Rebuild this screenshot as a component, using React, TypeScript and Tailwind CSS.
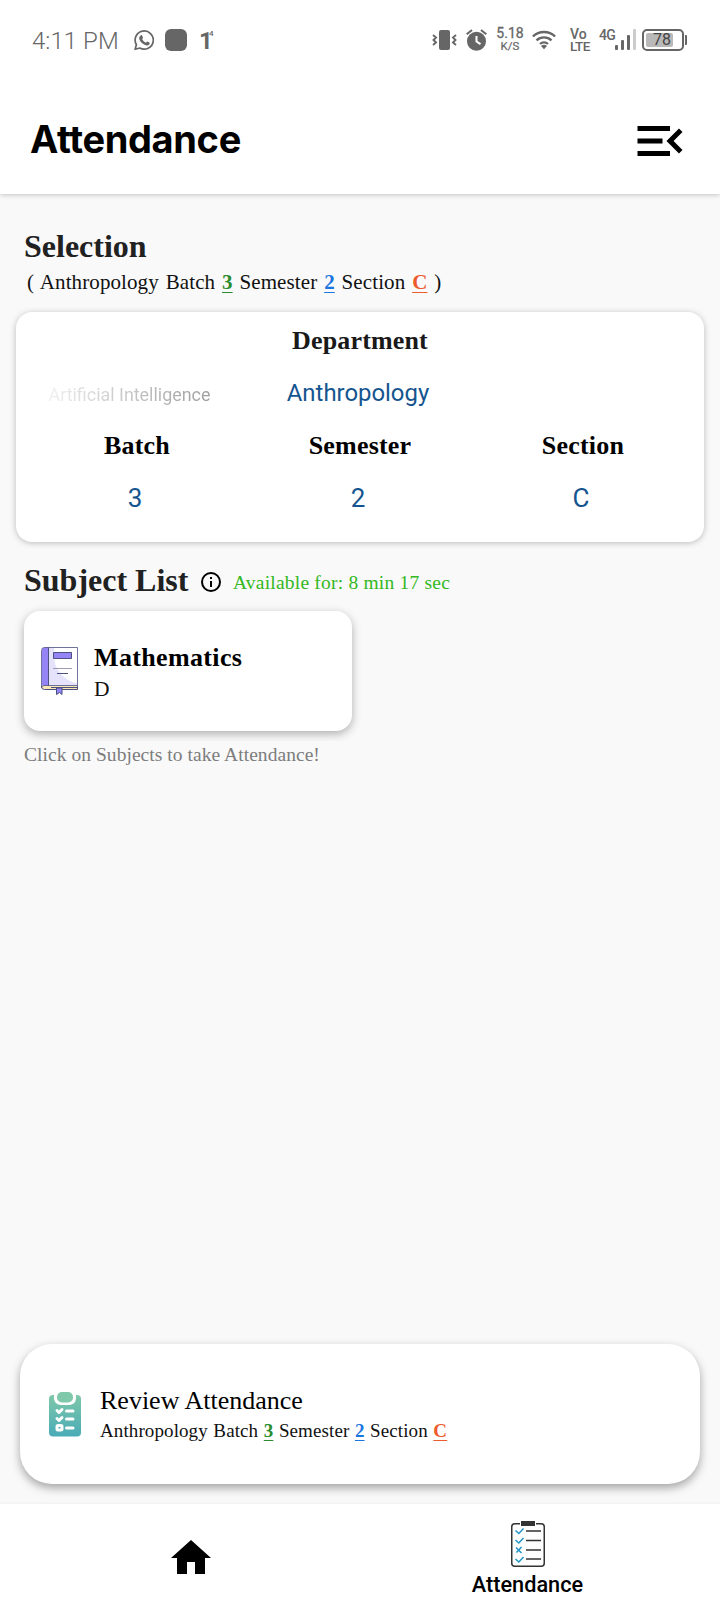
import React from "react";

const serif = "font-['Liberation_Serif',serif]";
const roboto = "font-[Roboto,sans-serif]";

function StatusBar() {
  return (
    <div className={`flex h-20 items-start text-[#666666] ${roboto}`}>
      <div className="ml-8 mt-[26px] w-[102px] whitespace-nowrap text-[24px] font-light leading-[30px] tracking-[0.050px]">4:11 PM</div>
      <svg className="mt-[30px] h-[21px] w-[20px]" viewBox="0 0 20 21" fill="none">
        <path d="M1.1 19.3l1.3-4.6A9.1 9.1 0 1 1 5.8 18z" stroke="#666" strokeWidth="1.7" strokeLinejoin="round" />
        <path d="M7 5.2c.7-.3 1 0 1.300.8l.7 1.700c.1.500-.8 1.200-.8 1.600.8 1.600 2 2.700 3.600 3.400.5.1 1.100-1.200 1.600-1.100l2 1c.6.400.2 1.700-.4 2.200-.9.700-2 .9-3.200.5-3-.9-5.200-3-6.400-5.700-.6-1.700.1-3.700 1.600-4.400z" fill="#666" />
      </svg>
      <div className="ml-[11px] mt-[29px] h-[22px] w-[22px] rounded-[6px] bg-[#666666]" />
      <div className="ml-[12px] mt-[29px] flex items-start">
        <span className="w-[10px] text-[24px] font-bold leading-[24px] tracking-[-4px]">1</span>
        <span className="text-[8px] font-medium leading-[10px]">4</span>
      </div>
      <div className="flex-1" />
      <svg className="mt-[29px] h-[22px] w-[25px]" viewBox="0 0 25 22" fill="none" stroke="#666" strokeWidth="1.9">
        <rect x="7" y="1" width="11" height="20" rx="2" fill="#666" stroke="none" />
        <path d="M1 6l3 2.500-2.500 2.500L4 13.500 1 16M24 6l-3 2.500 2.500 2.500-2.500 2.500L24 16" />
      </svg>
      <svg className="ml-[9px] mt-[29px] h-[22px] w-[21px]" viewBox="0 0 21 22" fill="none" stroke="#666">
        <circle cx="10.500" cy="12.300" r="9.500" fill="#666" stroke="none" />
        <path d="M.7 5.300L6 1M20.300 5.300L15 1" strokeWidth="2" />
        <path d="M10.500 7v5.500l4 2.700" stroke="#fff" strokeWidth="2" />
      </svg>
      <div className="ml-[8px] mt-[26px] flex w-[30px] flex-col items-center whitespace-nowrap">
        <div className="text-[14px] leading-[14px] [-webkit-text-stroke:0.300px_#666666]">5.18</div>
        <div className="mt-px text-[11.500px] leading-[11px] [-webkit-text-stroke:0.200px_#666666]">K/S</div>
      </div>
      <svg className="ml-[7px] mt-[30px] h-[20px] w-[24px]" viewBox="0 0 24 20" fill="none" stroke="#666" strokeWidth="2.300">
        <path d="M.9 6.500a16 16 0 0 1 22.200 0M4.500 10.300a11 11 0 0 1 15 0M8 14a6 6 0 0 1 8 0" />
        <path d="M12 19.200l-3-3.200a4.600 4.600 0 0 1 6 0z" fill="#666" stroke="none" />
      </svg>
      <div className="ml-[14px] mt-[27px] w-[22px] text-[14px] font-medium">
        <div className="leading-[14px]">Vo</div>
        <div className="-mt-px text-[13.500px] leading-[12px] tracking-[-0.6px]">LTE</div>
      </div>
      <div className="ml-[7px] mt-[27px] w-[16px] text-[14px] font-medium leading-[17px] tracking-[-0.700px]">4G</div>
      <svg className="mt-[29px] h-[22px] w-[21px]" viewBox="0 0 21 22">
        <rect x="0" y="16" width="3" height="5" rx="1" fill="#666" />
        <rect x="6" y="11" width="3" height="10" rx="1" fill="#666" />
        <rect x="12" y="6" width="3" height="15" rx="1" fill="#666" />
        <rect x="18" y="0" width="3" height="21" rx="1" fill="#ccc" />
      </svg>
      <div className="ml-[6px] mt-[29px] flex h-[22px] w-[42px] rounded-[5px] border-2 border-[#666666] p-[2px]">
        <div className="flex h-[14px] w-[27px] items-center rounded-[2px] bg-[#b9b9b9] pl-[7px] text-[16px] leading-[14px] text-[#444444]">78</div>
      </div>
      <div className="ml-[1px] mr-[33px] mt-[35px] h-[10px] w-[2px] rounded-r-[1px] bg-[#666666]" />
    </div>
  );
}

function Header() {
  return (
    <header className="flex h-[114px] items-start justify-between">
      <h1 className="ml-[30px] mt-[35px] font-[Inter,sans-serif] text-[38px] font-bold leading-[48px] tracking-[-0.350px] text-black">Attendance</h1>
      <svg className="mr-[30.500px] mt-[31px] h-[60px] w-[60px]" viewBox="0 0 24 24">
        <path d="M3 18h13v-2H3v2zm0-5h10v-2H3v2zm0-7v2h13V6H3zm18 9.590L17.420 12 21 8.410 19.590 7l-5 5 5 5L21 15.590z" />
      </svg>
    </header>
  );
}

function Choice() {
  return (
    <>
      Anthropology Batch <b className="text-[#2a8c2e] underline decoration-1 underline-offset-[3px]">3</b> Semester{" "}
      <b className="text-[#1976e0] underline decoration-1 underline-offset-[3px]">2</b> Section{" "}
      <b className="text-[#ee5a2c] underline decoration-1 underline-offset-[3px]">C</b>
    </>
  );
}

const pickers = [
  { label: "Batch", value: "3" },
  { label: "Semester", value: "2" },
  { label: "Section", value: "C" },
];

function SelectionCard() {
  return (
    <section className="mx-4 mt-[16px] h-[230px] rounded-[16px] bg-white px-[9.500px] pt-[13px] shadow-[0_1px_6px_rgba(0,0,0,0.25)]">
      <h3 className={`text-center text-[26px] font-bold leading-[32px] tracking-[0.150px] text-[#191919] ${serif}`}>Department</h3>
      <div className={`mt-4 grid h-10 grid-cols-3 items-center ${roboto}`}>
        <div className="ml-[23px] w-[164px] whitespace-nowrap bg-gradient-to-r from-[#f0f0f0] to-[#9c9c9c] bg-clip-text pt-[4px] text-[17.900px] leading-[36px] text-transparent">Artificial Intelligence</div>
        <div className="-ml-[4px] text-center text-[23.900px] leading-[40px] text-[#15558f]">Anthropology</div>
      </div>
      <div className="mt-[17px] grid grid-cols-3 text-center">
        {pickers.map((p) => (
          <div key={p.label}>
            <h3 className={`text-[26px] font-bold leading-[32px] tracking-[0.200px] text-black ${serif}`}>{p.label}</h3>
            <div className={`mr-[4px] mt-[16px] text-[26px] leading-[40px] text-[#15558f] ${roboto}`}>{p.value}</div>
          </div>
        ))}
      </div>
    </section>
  );
}

function BookIcon() {
  return (
    <svg className="h-[49px] w-[37px]" viewBox="0 0 37 49" fill="none" stroke="#4d5180">
      <path d="M4 1.500h32v38H1V4.500a3 3 0 0 1 3-3z" fill="#e5e2fb" stroke="none" />
      <path d="M13 1.500h23v36C23 34 13 24 13 10z" fill="#fff" stroke="none" />
      <path d="M4 1.500h3.500v38H1V4.500a3 3 0 0 1 3-3z" fill="#9584f6" stroke="none" />
      <path d="M1 40h35v3.500H4a3 3 0 0 1-3-3z" fill="#f8e7b4" stroke="none" />
      <path d="M36.500 39.500H4a3 3 0 0 0-3.500 2V4.500a3 3 0 0 1 3-3h33z" strokeOpacity=".8" />
      <path d="M7.500 1.500v38M.5 40v.5a3 3 0 0 0 3 3h33v-4M10 41.500h26" />
      <path d="M12.500 6.500h18v6h-18z" fill="#9584f6" />
      <path d="M12 22.500h19" stroke="#9b9bb4" />
      <path d="M16 27.500h11" />
      <path d="M15.500 42v6.500l3-2 2.500 2V42z" fill="#9584f6" />
    </svg>
  );
}

function ReviewIcon() {
  return (
    <svg className="h-[45px] w-[32px]" viewBox="0 0 32 45" fill="none">
      <defs>
        <linearGradient id="mint" x1="0" y1="0" x2="0" y2="1">
          <stop offset="0" stopColor="#7fc8a9" />
          <stop offset="1" stopColor="#49abb7" />
        </linearGradient>
      </defs>
      <rect y="3" width="32" height="41.500" rx="4" fill="url(#mint)" />
      <path d="M5 2h22v4c0 5-4 7-7 7h-8c-4 0-7-3-7-7z" fill="#fff" />
      <rect x="8" y="0" width="16" height="10.500" rx="5" fill="#7fc8a9" />
      <path d="M8 18.500l2 2 3-3M8 26.500l2 2 3-3" stroke="#fff" strokeWidth="3" strokeLinecap="round" strokeLinejoin="round" />
      <path d="M17.500 19H24M17.500 27H24M17.500 36H24" stroke="#fff" strokeWidth="3" strokeLinecap="round" />
      <rect x="8" y="33.500" width="5" height="4.500" rx="1" stroke="#fff" strokeWidth="3" />
    </svg>
  );
}

function ChecklistIcon() {
  return (
    <svg className="h-[46px] w-[34px]" viewBox="0 0 34 46" fill="none">
      <rect x=".75" y="2.750" width="32.500" height="42.500" rx="3" stroke="#333" strokeWidth="1.500" />
      <path d="M9 0h16v5H9z" fill="#fff" />
      <path d="M10 0h14v5H10z" fill="#333" />
      <path d="M15 10h15M15 19.500h15M15 29h15M15 38h15" stroke="#333" strokeWidth="1.700" />
      <path d="M4.500 9.500l3.300 3L12.500 7.500M4.500 19l3.300 3 4.700-5M5 26.500l5.500 5.500M10.500 26L5.500 31.500M4.500 38l3.300 3 4.700-5" stroke="#2295c9" strokeWidth="1.500" />
    </svg>
  );
}

export default function App() {
  return (
    <div className="flex h-[1612px] w-[720px] flex-col overflow-hidden bg-[#f9f9f9]">
      <div className="relative bg-white shadow-[0_1px_5px_rgba(0,0,0,0.22)]">
        <StatusBar />
        <Header />
      </div>
      <main className={`flex h-[1310px] flex-col ${serif}`}>
        <h2 className="ml-6 mt-8 text-[32px] font-bold leading-[40px] text-[#212121]">Selection</h2>
        <p className="ml-[27px] mt-[2px] whitespace-nowrap text-[21px] leading-[28px] tracking-[0.1px] text-[#111111] [word-spacing:1.500px]">
          ( <Choice /> )
        </p>
        <SelectionCard />
        <div className="ml-6 mt-[18px] flex h-10 items-start">
          <h2 className="w-[175px] whitespace-nowrap text-[32px] font-bold leading-[40px] text-[#212121]">Subject List</h2>
          <svg className="mt-[10px] h-6 w-6" viewBox="0 0 24 24">
            <path d="M11 7h2v2h-2zm0 4h2v6h-2zm1-9a10 10 0 1 0 0 20 10 10 0 0 0 0-20zm0 18a8 8 0 1 1 0-16 8 8 0 0 1 0 16z" />
          </svg>
          <span className="ml-[10px] mt-[9px] whitespace-nowrap text-[19.500px] leading-[28px] tracking-[0.210px] text-[#33b822]">Available for: 8 min 17 sec</span>
        </div>
        <div className="ml-[14px] w-[352px] overflow-hidden pb-[10px] pl-[10px] pt-[11px]">
          <article className="flex h-[120px] w-[328px] items-start rounded-[16px] bg-white shadow-[0_3px_10px_rgba(0,0,0,0.3)]">
            <div className="ml-[17px] mt-[35px]">
              <BookIcon />
            </div>
            <div className="ml-[16px] mt-[31px]">
              <div className="text-[26px] font-bold leading-[32px] tracking-[0.350px] text-black">Mathematics</div>
              <div className="mt-[1px] text-[21.500px] leading-[28px] text-[#111111]">D</div>
            </div>
          </article>
        </div>
        <p className="ml-6 whitespace-nowrap text-[19.500px] leading-[28px] tracking-[0.050px] text-[#7d7d7d]">Click on Subjects to take Attendance!</p>
        <section className="mx-5 mb-5 mt-auto flex h-[140px] items-start rounded-[32px] bg-white shadow-[0_4px_10px_rgba(0,0,0,0.34)]">
          <div className="ml-[29px] mt-[48px]">
            <ReviewIcon />
          </div>
          <div className="ml-[19px] mt-[41px] whitespace-nowrap">
            <div className="text-[26px] leading-[32px] text-black">Review Attendance</div>
            <div className="text-[19px] leading-[28px] tracking-[0.100px] text-[#111111] [word-spacing:0.700px]">
              <Choice />
            </div>
          </div>
        </section>
      </main>
      <nav className="relative grid h-[108px] grid-cols-2 bg-white shadow-[0_-1px_3px_rgba(0,0,0,0.04)]">
        <div className="pl-[167px] pt-[30px]">
          <svg className="h-12 w-12" viewBox="0 0 24 24">
            <path d="M10 20v-6h4v6h5v-8h3L12 3 2 12h3v8z" />
          </svg>
        </div>
        <div className="flex flex-col items-center pr-[25px] pt-[17px]">
          <ChecklistIcon />
          <div className={`mt-[2px] text-[21.700px] font-medium leading-[32px] text-black ${roboto}`}>Attendance</div>
        </div>
      </nav>
    </div>
  );
}
